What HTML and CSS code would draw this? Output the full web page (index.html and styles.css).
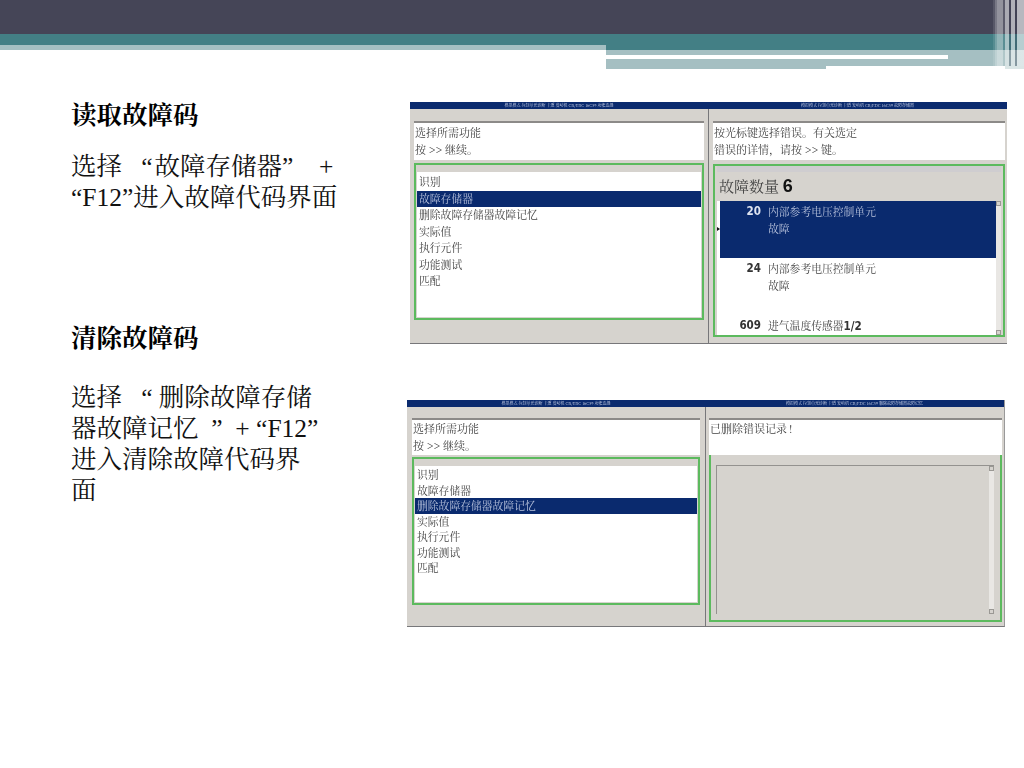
FILE: index.html
```html
<!DOCTYPE html>
<html lang="zh-CN">
<head>
<meta charset="utf-8">
<title>读取故障码</title>
<link rel="stylesheet" href="styles.css">
</head>
<body>
<header class="banner">
  <div class="banner-dark"></div>
  <div class="banner-bands">
    <div class="bands-left"><div class="teal teal-short"></div><div class="light light-short"></div></div>
    <div class="bands-right">
      <div class="teal teal-tall"></div>
      <div class="light light-short"></div>
      <div class="strip-row"><div class="strip-white"></div><div class="light strip-rest"></div></div>
      <div class="tail-row"><div class="light tail-long"></div><div class="light tail-short"></div></div>
    </div>
  </div>
  <div class="stripes"></div>
</header>
<main class="slide">
  <section class="notes">
    <h2 class="note-title">读取故障码</h2>
    <p class="note-text note-first">选择&nbsp;&nbsp; “&hairsp;故障存储器”&nbsp;&nbsp;&nbsp; +<br>“F12”进入故障代码界面</p>
    <h2 class="note-title note-title-second">清除故障码</h2>
    <p class="note-text note-second">选择 &nbsp;&nbsp;“ 删除故障存储<br>器故障记忆 &nbsp;”&nbsp; + “F12”<br>进入清除故障代码界<br>面</p>
  </section>
  <section class="shots">
    <div class="screen screen-read">
      <div class="titlebar"><span>模拟模式 控制单元诊断 卡道 发动机 CR/EDC 16C39 功能选择</span><span>模拟模式 控制单元诊断 卡道 发动机 CR/EDC 16C39 故障存储器</span></div>
      <div class="panes">
        <div class="pane pane-left">
          <div class="info">选择所需功能<br>按 <b>&gt;&gt;</b> 继续。</div>
          <div class="green">
            <ul class="menu">
              <li>识别</li><li class="on">故障存储器</li><li>删除故障存储器故障记忆</li><li>实际值</li><li>执行元件</li><li>功能测试</li><li>匹配</li>
            </ul>
          </div>
        </div>
        <div class="pane pane-right">
          <div class="info">按光标键选择错误。有关选定<br>错误的详情，请按 <b>&gt;&gt;</b> 键。</div>
          <div class="green green-faults">
            <div class="fault-count">故障数量 <b>6</b></div>
            <div class="faults">
              <div class="fault on"><span class="code">20</span><span>内部参考电压控制单元<br>故障</span></div>
              <div class="fault"><span class="code">24</span><span>内部参考电压控制单元<br>故障</span></div>
              <div class="fault"><span class="code">609</span><span>进气温度传感器<b class="cond">1/2</b></span></div>
              <div class="pointer"></div>
              <div class="scroll"><i></i><i></i></div>
            </div>
          </div>
        </div>
      </div>
    </div>
    <div class="screen screen-clear">
      <div class="titlebar"><span>模拟模式 控制单元诊断 卡道 发动机 CR/EDC 16C39 功能选择</span><span>模拟模式 控制单元诊断 卡道 发动机 CR/EDC 16C39 删除故障存储器故障记忆</span></div>
      <div class="panes">
        <div class="pane pane-left">
          <div class="info">选择所需功能<br>按 <b>&gt;&gt;</b> 继续。</div>
          <div class="green">
            <ul class="menu">
              <li>识别</li><li>故障存储器</li><li class="on">删除故障存储器故障记忆</li><li>实际值</li><li>执行元件</li><li>功能测试</li><li>匹配</li>
            </ul>
          </div>
        </div>
        <div class="pane pane-right">
          <div class="info">已删除错误记录<span class="bang">!</span></div>
          <div class="green green-open">
            <div class="empty"><div class="scroll"><i></i><i></i></div></div>
          </div>
        </div>
      </div>
    </div>
  </section>
</main>
</body>
</html>
```
FILE: styles.css
```css
* { box-sizing: border-box; }
html, body { margin: 0; padding: 0; background: #fff; }
body {
  width: 1024px;
  height: 768px;
  overflow: hidden;
  font-family: "Liberation Serif", "Noto Serif CJK SC", "Noto Sans CJK SC", serif;
  color: #111;
}

/* banner */
.banner { position: relative; height: 69px; }
.banner-dark { height: 34px; background: #454557; }
.banner-bands { display: flex; height: 35px; }
.bands-left { width: 606px; }
.bands-right { flex: 1; }
.teal { background: #437f85; }
.light { background: #a5bfc2; }
.teal-short { height: 11px; }
.teal-tall { height: 16px; }
.light-short { height: 5px; }
.strip-row { display: flex; height: 4px; }
.strip-white { width: 342px; background: #fff; }
.strip-rest { flex: 1; }
.tail-row { display: flex; align-items: flex-start; }
.tail-long { width: 220px; height: 10px; }
.tail-short { flex: 1; height: 7px; }
.stripes {
  position: absolute;
  top: 0;
  right: 0;
  width: 31px;
  height: 66px;
  background: linear-gradient(to right,
      rgba(255,255,255,.1) 0 2px,
      rgba(255,255,255,.28) 2px 4px,
      rgba(255,255,255,.42) 4px 10px,
      rgba(255,255,255,.12) 10px 12px,
      rgba(255,255,255,.55) 12px 16px,
      rgba(60,60,80,.25) 16px 18px,
      rgba(255,255,255,.58) 18px 22px,
      rgba(60,60,80,.3) 22px 24px,
      rgba(255,255,255,.62) 24px 31px);
}
.stripes::after {
  content: "";
  position: absolute;
  top: 66px;
  right: 0;
  width: 19px;
  height: 3px;
  background: #dbe6e6;
}

/* slide */
.slide { display: flex; }
.notes { width: 407px; padding: 31px 0 0 71px; }
.note-title { margin: 0; font-size: 25.5px; line-height: 32px; font-weight: 700; color: #000; }
.note-text { margin: 0; font-size: 25.5px; line-height: 31px; font-weight: 400; white-space: nowrap; color: #111; }
.note-first { margin-top: 19px; }
.note-title-second { margin-top: 110px; }
.note-second { margin-top: 27px; }

/* screenshots */
.shots { display: flex; flex-direction: column; padding-top: 33px; gap: 56px; width: 617px; }
.screen {
  background: #d6d3ce;
  border-bottom: 1px solid #77777a;
  filter: blur(.35px);
  color: #444;
  font-size: 10.8px;
  font-family: "Noto Serif CJK SC", "Noto Sans CJK SC", sans-serif;
}
.screen-read { width: 597px; height: 242px; margin-left: 3px; }
.screen-clear { width: 598px; height: 227px; border-right: 1px solid #999; }
.titlebar { display: grid; grid-template-columns: 298px 1fr; height: 7px; background: #0a2a6e; color: #cfd6ea; font-size: 4px; line-height: 7px; text-align: center; }
.panes { display: grid; grid-template-columns: 298px 1fr; height: calc(100% - 7px); }
.pane { padding-top: 12px; }
.pane-right { border-left: 1px solid #77777a; padding-top: 12px; }
.pane-left { padding-left: 4px; padding-right: 4px; }
.pane-right { padding-left: 4px; padding-right: 2px; }
.info { height: 39px; background: #fff; border-top: 2px solid #8c8a88; padding: 1px 1px 0; line-height: 17px; font-size: 11px; white-space: nowrap; }
.info b { color: #333; }
.green { border: 2px solid #5cba5e; margin-top: 3px; padding: 7px 1px 1px 1px; background: #d6d3ce; height: 157px; }
.menu { list-style: none; margin: 0; padding: 2px 0 0; background: #fff; height: 100%; line-height: 16.5px; }
.menu li { padding-left: 2px; white-space: nowrap; }
.menu .on { background: #0a2a6e; color: #b8c2dc; }

/* fault list */
.green-faults { height: 173px; padding: 0 2px; margin-top: 4px; }
.fault-count { height: 35px; padding: 2px 0 0 2px; font-size: 15px; line-height: 24px; color: #444; border-top: 6px solid #cfcdd0; }
.fault-count b { font-family: "Liberation Sans", sans-serif; font-size: 18px; color: #111; }
.faults { position: relative; height: 134px; background: #fff; padding: 0 5px 0 3px; overflow: hidden; }
.fault { display: flex; gap: 7px; height: 57px; padding-top: 2px; line-height: 17px; white-space: nowrap; }
.fault .code { width: 41px; text-align: right; font-family: "DejaVu Sans", sans-serif; font-stretch: condensed; font-size: 11.5px; font-weight: 700; color: #333; }
.cond { font-family: "DejaVu Sans", sans-serif; font-stretch: condensed; font-size: 11.5px; color: #333; }
.fault.on { background: #0a2a6e; color: #b8c2dc; }
.fault.on .code { color: #dfe4f0; }
.pointer { position: absolute; left: 0; top: 26px; border-left: 3px solid #111; border-top: 2px solid transparent; border-bottom: 2px solid transparent; }
.scroll { position: absolute; top: 0; right: 0; bottom: 0; width: 5px; background: #e9e7e4; display: flex; flex-direction: column; justify-content: space-between; }
.scroll i { display: block; height: 5px; background: #d6d3ce; border: 1px solid #9a9894; }

/* cleared pane */
.screen-clear .pane-left { padding-left: 5px; padding-right: 5px; padding-top: 11px; }
.screen-clear .pane-right { padding-top: 11px; padding-left: 3px; }
.screen-clear .info { height: 37px; padding-top: 0; }
.screen-clear .green { height: 148px; margin-top: 2px; padding-top: 7px; }
.screen-clear .menu { padding-top: 1px; line-height: 15.5px; }
.screen-clear .green-open { height: 167px; margin-top: 0; border-top: 0; padding: 10px 6px 6px 5px; }
.empty { position: relative; height: 100%; background: #d6d3ce; border-top: 1px solid #94928f; border-left: 1px solid #94928f; }
.bang { margin-left: 2px; }
```
